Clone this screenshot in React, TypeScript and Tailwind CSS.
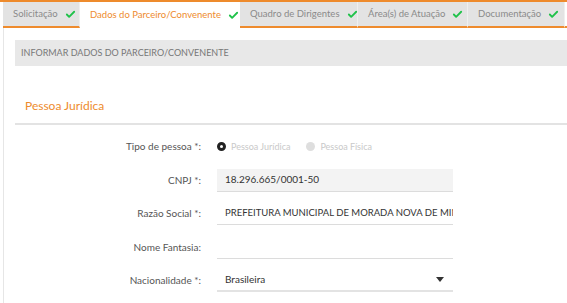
import { Check } from "lucide-react";

const TABS = [
  { label: "Solicitação", w: "w-[77px]" },
  { label: "Dados do Parceiro/Convenente", w: "w-[160px]", active: true },
  { label: "Quadro de Dirigentes", w: "w-[118px]" },
  { label: "Área(s) de Atuação", w: "w-[110px]" },
  { label: "Documentação", w: "w-[97px]" },
];

function Row({ label, children }: { label: string; children: React.ReactNode }) {
  return (
    <div className="flex items-center h-[33.5px]">
      <div className="w-[186px] text-right text-[10px] text-[#555]">{label}</div>
      <div className="ml-[16px] w-[236px]">{children}</div>
    </div>
  );
}

export default function App() {
  return (
    <div className="h-[303px] w-[567px] overflow-hidden bg-white font-['Lato',sans-serif]">
      {/* Tabs */}
      <div className="flex border-t-2 border-[#ee8b2d] pl-[3px]">
        {TABS.map((t) => (
          <div
            key={t.label}
            className={
              t.active
                ? `${t.w} h-[26px] shrink-0 whitespace-nowrap flex items-center pl-[10px] gap-[7px] bg-white text-[#ee8b2d] text-[9.5px]`
                : `${t.w} h-[26px] shrink-0 whitespace-nowrap flex items-center pl-[10px] gap-[7px] bg-[#e3e3e3] border-r border-[#efefef] border-b-2 border-b-[#ee8b2d] text-[#8a8a8a] text-[9.5px]`
            }
          >
            <span>{t.label}</span>
            <Check className="h-[11px] w-[11px] shrink-0 text-[#1fc24a]" strokeWidth={4} />
          </div>
        ))}
        <div className="flex-1 h-[26px] border-b-2 border-[#ee8b2d]" />
      </div>

      {/* Content */}
      <div className="ml-[3px] h-full border-l border-[#e6e6e6] pl-[11px] pt-[12px]">
        <div className="h-[26px] bg-[#e8e8e8] flex items-center pl-[6px] text-[9px] text-[#777]">
          INFORMAR DADOS DO PARCEIRO/CONVENENTE
        </div>

        <div className="mt-[31px] h-[28px] border-b-2 border-[#e3e3e3] pl-[10px] text-[12px] text-[#ee8b2d] flex items-start">
          Pessoa Jurídica
        </div>

        <div className="pt-[5px]">
          <Row label="Tipo de pessoa *:">
            <div className="flex items-center text-[9px] text-[#c9c9c9]">
              <span className="h-[9px] w-[9px] rounded-full border-[3px] border-[#222] bg-white" />
              <span className="ml-[5px]">Pessoa Jurídica</span>
              <span className="ml-[16px] h-[9px] w-[9px] rounded-full bg-[#dedede]" />
              <span className="ml-[5px]">Pessoa Física</span>
            </div>
          </Row>
          <Row label="CNPJ *:">
            <div className="h-[23px] bg-[#f3f3f3] border-b border-[#dcdcdc] flex items-center pl-[8px] text-[10px] text-[#333]">
              18.296.665/0001-50
            </div>
          </Row>
          <Row label="Razão Social *:">
            <div className="h-[23px] border-b border-[#dcdcdc] flex items-center pl-[8px] text-[9.5px] text-[#333] overflow-hidden whitespace-nowrap">
              PREFEITURA MUNICIPAL DE MORADA NOVA DE MINAS
            </div>
          </Row>
          <Row label="Nome Fantasia:">
            <div className="h-[23px] border-b border-[#dcdcdc]" />
          </Row>
          <Row label="Nacionalidade *:">
            <div className="h-[23px] border-b-2 border-[#e3e3e3] flex items-center justify-between pl-[8px] pr-[9px] text-[10px] text-[#333]">
              <span>Brasileira</span>
              <span className="w-0 h-0 border-l-[4px] border-r-[4px] border-t-[5px] border-l-transparent border-r-transparent border-t-[#333]" />
            </div>
          </Row>
        </div>
      </div>
    </div>
  );
}
